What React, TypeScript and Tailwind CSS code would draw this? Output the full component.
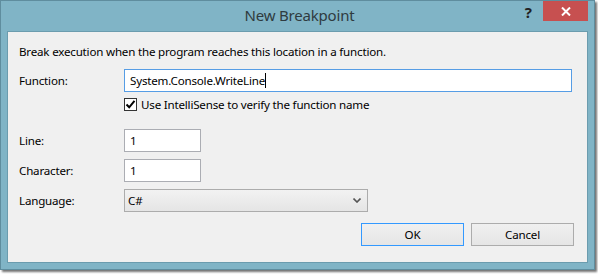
import React from "react";

const font = { fontFamily: '"Noto Sans", "Segoe UI", sans-serif' };

function TextBox({ value, width, focused, caret }: { value: string; width: string; focused?: boolean; caret?: boolean }) {
  return (
    <div
      className={`${width} h-[23px] bg-white border flex items-center pl-[5px] text-black ${
        focused ? "border-[#569de5]" : "border-[#abadb3]"
      }`}
    >
      <span>{value}</span>
      {caret ? <span className="w-px h-[15px] bg-black" /> : null}
    </div>
  );
}

export default function App() {
  return (
    <div className="w-[598px] h-[274px] bg-white" style={font}>
      <div className="w-[595px] h-[270px] bg-[#80b4c6] border border-[#5f8d9e] shadow-[2px_2px_2px_rgba(0,0,0,0.55)] flex flex-col">
        {/* Title bar */}
        <div className="h-[30px] grid grid-cols-[1fr_auto_1fr]">
          <div />
          <div className="text-[15px] leading-[29px] text-[#2f3b40] pl-[4px] tracking-[-0.2px]">New Breakpoint</div>
          <div className="flex justify-end items-start pr-[6px]">
            <div className="mt-[3px] mr-[11px] text-[15px] font-bold leading-[16px] text-[#222]">?</div>
            <div className="w-[45px] h-[20px] bg-[#c75050] flex items-center justify-center">
              <svg width="10" height="9" viewBox="0 0 10 9">
                <path d="M1 0.5 L9 8.5 M9 0.5 L1 8.5" stroke="white" strokeWidth="2" />
              </svg>
            </div>
          </div>
        </div>
        {/* Client area */}
        <div className="mx-[6px] mb-[6px] flex-1 border border-[#6b9cae] bg-[#f0f0f0] flex flex-col pl-[11px] text-[11.6px] tracking-[-0.2px] text-black">
          <div className="pt-[12px] h-[28px] leading-[16px]">
            Break execution when the program reaches this location in a function.
          </div>
          <div className="mt-[9px] flex items-center h-[23px]">
            <div className="w-[105px]">Function:</div>
            <TextBox value="System.Console.WriteLine" width="w-[448px]" focused caret />
          </div>
          <div className="mt-[6px] flex items-center h-[13px] pl-[105px]">
            <div className="w-[13px] h-[13px] border border-[#333] bg-white flex items-center justify-center">
              <svg width="11" height="11" viewBox="0 0 11 11">
                <path d="M1.5 5.5 L4.2 8.3 L9.5 1.8" stroke="black" strokeWidth="2" fill="none" />
              </svg>
            </div>
            <span className="ml-[4px] leading-[16px]">Use IntelliSense to verify the function name</span>
          </div>
          <div className="mt-[18px] flex items-center h-[23px]">
            <div className="w-[105px]">Line:</div>
            <TextBox value="1" width="w-[77px]" />
          </div>
          <div className="mt-[7px] flex items-center h-[23px]">
            <div className="w-[105px]">Character:</div>
            <TextBox value="1" width="w-[77px]" />
          </div>
          <div className="mt-[7px] flex items-center h-[23px]">
            <div className="w-[105px]">Language:</div>
            <div className="w-[244px] h-[23px] border border-[#acacac] bg-gradient-to-b from-[#f2f2f2] to-[#e5e5e5] flex items-center pl-[3px] pr-[6px]">
              <span className="flex-1">C#</span>
              <svg width="8" height="5" viewBox="0 0 8 5">
                <path d="M0.5 0.5 L4 4 L7.5 0.5" stroke="#555" strokeWidth="1.6" fill="none" />
              </svg>
            </div>
          </div>
          <div className="mt-[11px] flex justify-end gap-[7px] pr-[13px]">
            <div className="w-[103px] h-[23px] border border-[#3399ff] bg-gradient-to-b from-[#f0f0f0] to-[#e5e5e5] flex items-center justify-center">
              OK
            </div>
            <div className="w-[103px] h-[23px] border border-[#acacac] bg-gradient-to-b from-[#f0f0f0] to-[#e5e5e5] flex items-center justify-center">
              Cancel
            </div>
          </div>
        </div>
      </div>
    </div>
  );
}
